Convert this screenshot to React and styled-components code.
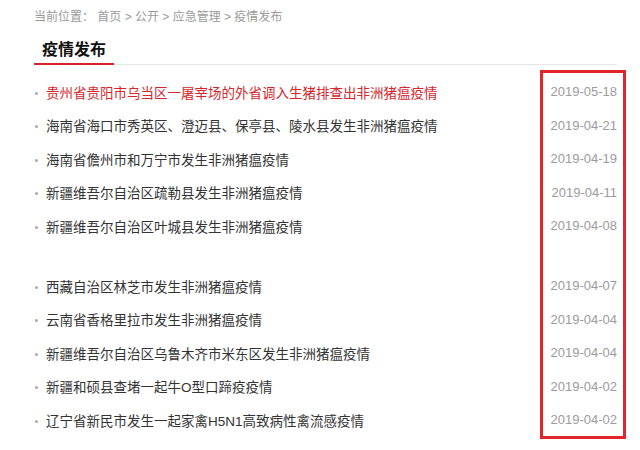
import React from "react";
import styled, { createGlobalStyle } from "styled-components";

const Global = createGlobalStyle`
  html, body {
    margin: 0;
    padding: 0;
    background: #fff;
  }
  body {
    font-family: "Liberation Sans", "Noto Sans CJK SC", sans-serif;
  }
`;

const Page = styled.div`
  position: relative;
  width: 640px;
  height: 450px;
  box-sizing: border-box;
  padding: 10px 23px 0 34px;
  overflow: hidden;
`;

const Crumbs = styled.div`
  font-size: 12px;
  line-height: 14px;
  color: #9a9a9a;
  white-space: pre;
`;

const TitleBar = styled.div`
  margin-top: 14px;
  display: flex;
  border-bottom: 1px solid #e6e6e6;
`;

const Title = styled.h2`
  margin: 0 0 -1px;
  padding: 0 8px 1px 8px;
  font-size: 16px;
  line-height: 24px;
  font-weight: bold;
  color: #111;
  border-bottom: 2px solid #d9232a;
`;

const List = styled.ul`
  list-style: none;
  margin: ${(p) => (p.$first ? "10px" : "26.5px")} 0 0;
  padding: 0;
`;

const Row = styled.li`
  display: flex;
  align-items: center;
  justify-content: space-between;
  height: 33.5px;
`;

const Link = styled.span`
  display: flex;
  align-items: center;
  font-size: 13.5px;
  color: ${(p) => (p.$hot ? "#d6262c" : "#333")};
  &::before {
    content: "";
    width: 3px;
    height: 3px;
    margin: 3px 8px 0 1px;
    background: #aaa;
    border-radius: 50%;
  }
`;

const Date = styled.span`
  font-size: 13px;
  color: #9b9b9b;
`;

const Highlight = styled.div`
  position: absolute;
  left: 540px;
  top: 70px;
  width: 86px;
  height: 369px;
  box-sizing: border-box;
  border: 3px solid #e0252b;
  pointer-events: none;
`;

const groupA = [
  ["贵州省贵阳市乌当区一屠宰场的外省调入生猪排查出非洲猪瘟疫情", "2019-05-18", true],
  ["海南省海口市秀英区、澄迈县、保亭县、陵水县发生非洲猪瘟疫情", "2019-04-21"],
  ["海南省儋州市和万宁市发生非洲猪瘟疫情", "2019-04-19"],
  ["新疆维吾尔自治区疏勒县发生非洲猪瘟疫情", "2019-04-11"],
  ["新疆维吾尔自治区叶城县发生非洲猪瘟疫情", "2019-04-08"],
];

const groupB = [
  ["西藏自治区林芝市发生非洲猪瘟疫情", "2019-04-07"],
  ["云南省香格里拉市发生非洲猪瘟疫情", "2019-04-04"],
  ["新疆维吾尔自治区乌鲁木齐市米东区发生非洲猪瘟疫情", "2019-04-04"],
  ["新疆和硕县查堵一起牛O型口蹄疫疫情", "2019-04-02"],
  ["辽宁省新民市发生一起家禽H5N1高致病性禽流感疫情", "2019-04-02"],
];

const Group = ({ items, first }) => (
  <List $first={first}>
    {items.map(([text, date, hot]) => (
      <Row key={text}>
        <Link $hot={hot}>{text}</Link>
        <Date>{date}</Date>
      </Row>
    ))}
  </List>
);

export default function App() {
  return (
    <Page>
      <Global />
      <Crumbs>当前位置： 首页 &gt; 公开 &gt; 应急管理 &gt; 疫情发布</Crumbs>
      <TitleBar>
        <Title>疫情发布</Title>
      </TitleBar>
      <Group items={groupA} first />
      <Group items={groupB} />
      <Highlight />
    </Page>
  );
}
